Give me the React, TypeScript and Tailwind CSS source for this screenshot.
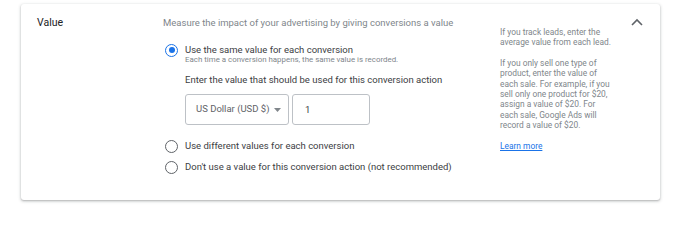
import React, { useState } from "react";

const help = [
  ["If you track leads, enter the", "average value from each lead."],
  [
    "If you only sell one type of",
    "product, enter the value of",
    "each sale. For example, if you",
    "sell only one product for $20,",
    "assign a value of $20. For",
    "each sale, Google Ads will",
    "record a value of $20.",
  ],
];

const options = [
  "Use the same value for each conversion",
  "Use different values for each conversion",
  "Don't use a value for this conversion action (not recommended)",
];

function Radio({ checked }: { checked: boolean }) {
  return (
    <span
      className={
        "flex h-[13px] w-[13px] shrink-0 items-center justify-center rounded-full border-[1.5px] " +
        (checked ? "border-[#1a73e8]" : "border-[#5f6368]")
      }
    >
      {checked && <span className="h-[6px] w-[6px] rounded-full bg-[#1a73e8]" />}
    </span>
  );
}

export default function App() {
  const [choice, setChoice] = useState(0);
  const [amount, setAmount] = useState("1");

  return (
    <div className="h-[205px] w-[680px] bg-white pt-[4px] pl-[21px] font-['Roboto',sans-serif]">
      <div className="flex h-[196px] w-[639px] rounded-[3px] bg-white shadow-[0_1px_2px_rgba(60,64,67,0.3),0_1px_3px_1px_rgba(60,64,67,0.12)]">
        <div className="w-[142px] shrink-0 pl-[16px] pt-[12px] text-[10.5px] leading-[14px] text-[#202124]">
          Value
        </div>

        <div className="w-[337px] shrink-0 pt-[12px]">
          <p className="text-[9.5px] leading-[14px] text-[#80868b]">
            Measure the impact of your advertising by giving conversions a value
          </p>

          <label className="mt-[14px] ml-[2px] flex cursor-pointer gap-[7px]" onClick={() => setChoice(0)}>
            <span className="flex h-[12px] items-center">
              <Radio checked={choice === 0} />
            </span>
            <span>
              <span className="block text-[9.5px] leading-[12px] text-[#3c4043]">{options[0]}</span>
              <span className="block text-[7.9px] leading-[8px] text-[#80868b]">
                Each time a conversion happens, the same value is recorded.
              </span>
            </span>
          </label>

          {choice === 0 && (
            <div className="ml-[22px] mt-[10px]">
              <div className="text-[9.5px] leading-[12px] text-[#3c4043]">
                Enter the value that should be used for this conversion action
              </div>
              <div className="mt-[8px] flex gap-[3px]">
                <button className="flex h-[31px] w-[104px] items-center rounded-[3px] border border-[#bdc1c6] pl-[10px] text-[9.5px] text-[#5f6368]">
                  US Dollar (USD $)
                  <svg className="ml-[5px]" width="7" height="4" viewBox="0 0 7 4">
                    <path d="M0 0 L7 0 L3.5 4 Z" fill="#80868b" />
                  </svg>
                </button>
                <input
                  value={amount}
                  onChange={(e) => setAmount(e.target.value)}
                  className="h-[31px] w-[78px] rounded-[3px] border border-[#bdc1c6] px-[12px] text-[9.5px] text-[#3c4043] outline-none"
                />
              </div>
            </div>
          )}

          <div className="mt-[14px] ml-[2px] flex flex-col gap-[7px]">
            {options.slice(1).map((o, i) => (
              <label
                key={o}
                className="flex h-[14px] cursor-pointer items-center gap-[7px]"
                onClick={() => setChoice(i + 1)}
              >
                <Radio checked={choice === i + 1} />
                <span className="text-[9.5px] leading-[14px] text-[#3c4043]">{o}</span>
              </label>
            ))}
          </div>
        </div>

        <div className="w-[125px] shrink-0 pt-[22.8px] text-[8.4px] leading-[10.4px] text-[#80868b]">
          {help.map((p, i) => (
            <p key={i} className="mb-[10.2px]">
              {p.map((line) => (
                <span key={line} className="block whitespace-nowrap">
                  {line}
                </span>
              ))}
            </p>
          ))}
          <a href="#" className="mt-[1px] block text-[#1a73e8] underline">
            Learn more
          </a>
        </div>

        <div className="flex-1 pt-[14px] pl-[6px]">
          <svg width="12" height="8" viewBox="0 0 12 8">
            <path d="M1 7 L6 2 L11 7" stroke="#5f6368" strokeWidth="1.6" fill="none" />
          </svg>
        </div>
      </div>
    </div>
  );
}
